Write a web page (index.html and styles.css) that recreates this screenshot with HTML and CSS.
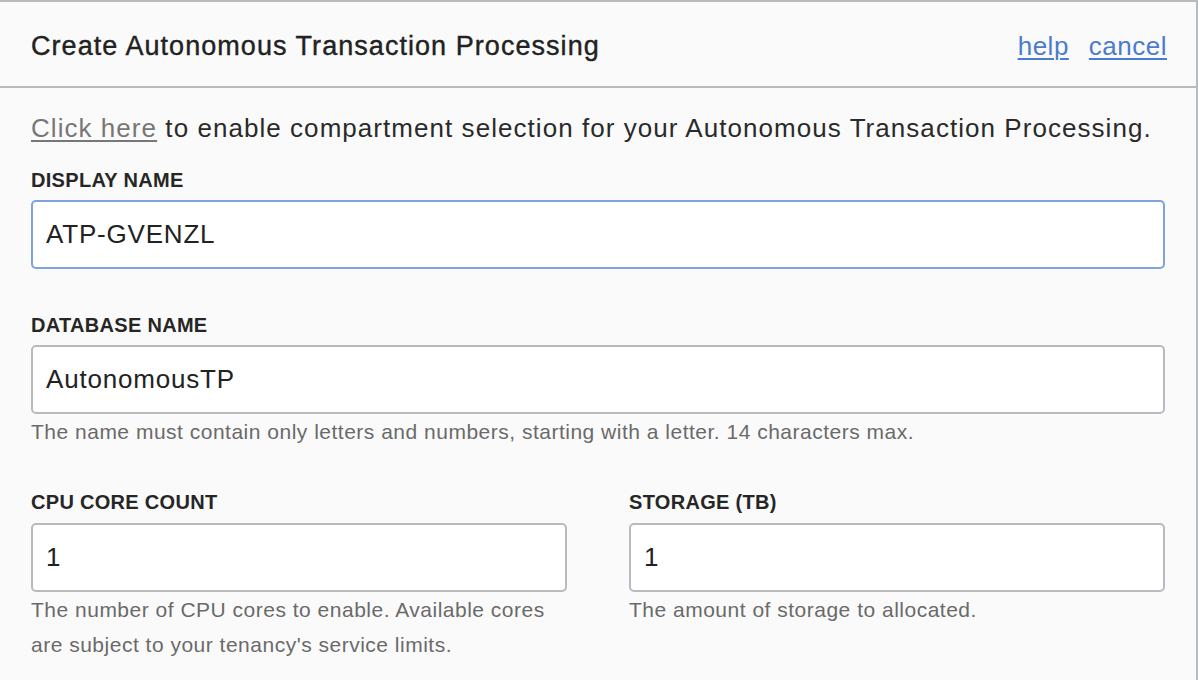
FILE: index.html
```html
<!DOCTYPE html>
<html lang="en">
<head>
<meta charset="utf-8">
<title>Create Autonomous Transaction Processing</title>
<link rel="stylesheet" href="styles.css">
</head>
<body>
<div class="dialog">
  <header class="header">
    <h1 class="title">Create Autonomous Transaction Processing</h1>
    <nav class="actions">
      <a href="#" class="action">help</a>
      <a href="#" class="action">cancel</a>
    </nav>
  </header>
  <main class="body">
    <p class="intro"><a href="#" class="intro-link">Click here</a> to enable compartment selection for your Autonomous Transaction Processing.</p>

    <div class="field">
      <label class="label">DISPLAY NAME</label>
      <div class="input focused">ATP-GVENZL</div>
    </div>

    <div class="field">
      <label class="label">DATABASE NAME</label>
      <div class="input">AutonomousTP</div>
      <p class="hint">The name must contain only letters and numbers, starting with a letter. 14 characters max.</p>
    </div>

    <div class="row">
      <div class="field">
        <label class="label">CPU CORE COUNT</label>
        <div class="input">1</div>
        <p class="hint">The number of CPU cores to enable. Available cores are subject to your tenancy's service limits.</p>
      </div>
      <div class="field">
        <label class="label">STORAGE (TB)</label>
        <div class="input">1</div>
        <p class="hint">The amount of storage to allocated.</p>
      </div>
    </div>
  </main>
</div>
</body>
</html>
```
FILE: styles.css
```css
html, body {
  margin: 0;
  padding: 0;
  background: #fafafa;
  font-family: "Liberation Sans", Arial, sans-serif;
  color: #2a2a2a;
}

.dialog {
  width: 1196px;
  height: 678px;
  border-top: 2px solid #b7bbbf;
  border-right: 2px solid #b7bbbf;
  overflow: hidden;
}

.header {
  height: 80px;
  border-bottom: 2px solid #b7bbbf;
  display: flex;
  align-items: center;
  justify-content: space-between;
  padding: 4px 29px 0 31px;
}

.title {
  margin: 0;
  font-size: 27px;
  font-weight: normal;
  color: #222;
  letter-spacing: 1.05px;
  -webkit-text-stroke: 0.4px #222;
}

.actions {
  display: flex;
  gap: 20px;
}

.action {
  font-size: 26px;
  letter-spacing: 0.5px;
  color: #4a7bd0;
  text-decoration: underline;
  text-decoration-thickness: 2px;
  text-underline-offset: 3px;
}

.body {
  padding: 0 31px 0 31px;
}

.intro {
  margin: 25px 0 0 0;
  font-size: 26px;
  line-height: 30px;
  letter-spacing: 1.05px;
  color: #2a2a2a;
  white-space: nowrap;
}

.intro-link {
  color: #777;
  text-decoration: underline;
  text-decoration-thickness: 2px;
  text-underline-offset: 3px;
}

.field {
  display: flex;
  flex-direction: column;
}

.label {
  font-size: 20px;
  font-weight: bold;
  line-height: 24px;
  letter-spacing: 0.3px;
  color: #262626;
  margin-top: 25px;
  margin-bottom: 8px;
}

.field + .field > .label {
  margin-top: 44px;
}

.input {
  box-sizing: border-box;
  height: 69px;
  background: #fff;
  border: 2px solid #b7bbbf;
  border-radius: 5px;
  padding: 0 13px;
  display: flex;
  align-items: center;
  font-size: 26px;
  letter-spacing: 0.8px;
  color: #222;
}

.input.focused {
  border-color: #7fa1dc;
}

.hint {
  margin: 0;
  font-size: 21px;
  line-height: 35px;
  letter-spacing: 0.5px;
  color: #6a6a6a;
}

.row {
  display: grid;
  grid-template-columns: 536px 536px;
  column-gap: 62px;
}

.row > .field > .label {
  margin-top: 41px;
  margin-bottom: 9px;
}
```
